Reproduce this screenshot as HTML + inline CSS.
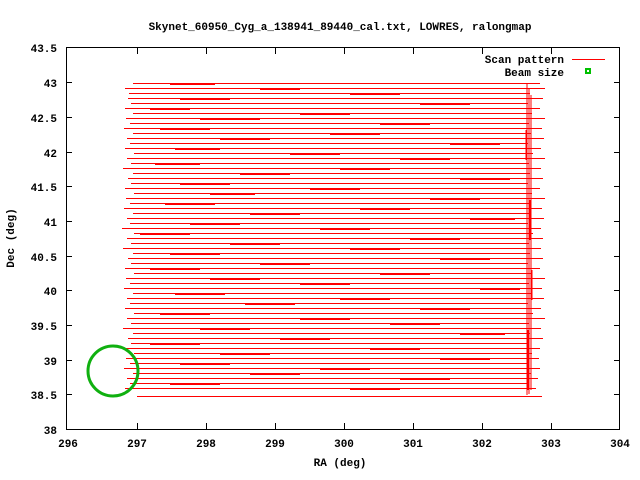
<!DOCTYPE html>
<html><head><style>
body{margin:0;background:#fff;}
svg{display:block;}
text{font-family:"Liberation Mono",monospace;font-size:11px;font-weight:bold;fill:#000;}
</style></head><body>
<svg width="640" height="480" viewBox="0 0 640 480" xmlns="http://www.w3.org/2000/svg">
<text x="340" y="30" text-anchor="middle">Skynet_60950_Cyg_a_138941_89440_cal.txt, LOWRES, ralongmap</text>
<g stroke="#000" stroke-width="1" fill="none" shape-rendering="crispEdges">
<rect x="66.5" y="47.5" width="553" height="382"/>
<path d="M137.5 429V423M137.5 48V54M206.5 429V423M206.5 48V54M275.5 429V423M275.5 48V54M344.5 429V423M344.5 48V54M413.5 429V423M413.5 48V54M482.5 429V423M482.5 48V54M551.5 429V423M551.5 48V54
M66 82.5H72M620 82.5H614M66 117.5H72M620 117.5H614M66 152.5H72M620 152.5H614M66 186.5H72M620 186.5H614M66 221.5H72M620 221.5H614M66 256.5H72M620 256.5H614M66 290.5H72M620 290.5H614M66 325.5H72M620 325.5H614M66 360.5H72M620 360.5H614M66 394.5H72M620 394.5H614"/>
</g>
<g text-anchor="end">
<text x="57" y="52">43.5</text><text x="57" y="87">43</text><text x="57" y="122">42.5</text><text x="57" y="157">42</text><text x="57" y="191">41.5</text><text x="57" y="226">41</text><text x="57" y="261">40.5</text><text x="57" y="295">40</text><text x="57" y="330">39.5</text><text x="57" y="365">39</text><text x="57" y="399">38.5</text><text x="57" y="434">38</text>
</g>
<g text-anchor="middle">
<text x="68" y="447">296</text><text x="137" y="447">297</text><text x="206" y="447">298</text><text x="275" y="447">299</text><text x="344" y="447">300</text><text x="413" y="447">301</text><text x="482" y="447">302</text><text x="551" y="447">303</text><text x="620" y="447">304</text>
<text x="340" y="466">RA (deg)</text>
</g>
<text x="14" y="238" text-anchor="middle" transform="rotate(-90 14 238)">Dec (deg)</text>
<text x="564" y="63" text-anchor="end">Scan pattern</text>
<text x="564" y="76" text-anchor="end">Beam size</text>
<rect x="572" y="59" width="33" height="1" fill="#f00"/>
<rect x="586" y="69" width="4" height="4" fill="none" stroke="#00c000" stroke-width="2"/>
<g stroke="#f00" stroke-width="1" fill="none" shape-rendering="crispEdges">
<path d="
M133 83.5H540M125 88.5H545M129 93.5H530M128 98.5H543M131 103.5H528M125 108.5H540M133 113.5H532M126 118.5H545M130 123.5H529M124 128.5H542M133 133.5H531M127 138.5H544M130 143.5H528M125 148.5H541M134 153.5H533M127 158.5H545M131 163.5H529M123 168.5H541M133 173.5H530M128 178.5H543M131 183.5H528M125 188.5H540M134 193.5H532M126 198.5H545M130 203.5H529M124 208.5H542M133 213.5H531M127 218.5H544M130 223.5H528M122 228.5H541M134 233.5H533M127 238.5H543M131 243.5H529M123 248.5H541M133 253.5H530M128 258.5H543M131 263.5H528M125 268.5H540M134 273.5H532M126 278.5H545M130 283.5H529M124 288.5H542M133 293.5H531M127 298.5H544M130 303.5H528M125 308.5H541M134 313.5H533M127 318.5H545M131 323.5H529M123 328.5H541M133 333.5H530M128 338.5H543M131 343.5H528M125 348.5H540M134 353.5H532M126 358.5H539M130 363.5H529M124 368.5H540M133 373.5H531M127 378.5H538M130 383.5H528M125 388.5H536M137 396.5H542
M170 84.5H215M260 89.5H300M350 94.5H400M180 99.5H230M420 104.5H470M150 109.5H190M300 114.5H350M200 119.5H260M380 124.5H430M160 129.5H210M330 134.5H380M220 139.5H270M450 144.5H500M175 149.5H220M290 154.5H340M400 159.5H450M155 164.5H200M340 169.5H390M240 174.5H290M460 179.5H510M180 184.5H230M310 189.5H360M210 194.5H255M430 199.5H480M165 204.5H215M360 209.5H410M250 214.5H300M470 219.5H515M190 224.5H240M320 229.5H370M140 234.5H190M410 239.5H460M230 244.5H280M350 249.5H400M170 254.5H220M440 259.5H490M260 264.5H310M150 269.5H200M380 274.5H430M210 279.5H260M300 284.5H350M480 289.5H520M175 294.5H225M340 299.5H390M245 304.5H295M420 309.5H470M160 314.5H210M300 319.5H350M390 324.5H440M200 329.5H250M460 334.5H505M280 339.5H330M150 344.5H200M370 349.5H420M220 354.5H270M440 359.5H490M180 364.5H230M320 369.5H370M250 374.5H300M400 379.5H450M170 384.5H220M350 389.5H400
M527 83V395M529 88V394M531 95V390M526 130V160M530 200V240M532 270V300M528 330V390"/>
</g>
<circle cx="113" cy="371" r="25" fill="none" stroke="#10b010" stroke-width="3"/>
</svg>
</body></html>
